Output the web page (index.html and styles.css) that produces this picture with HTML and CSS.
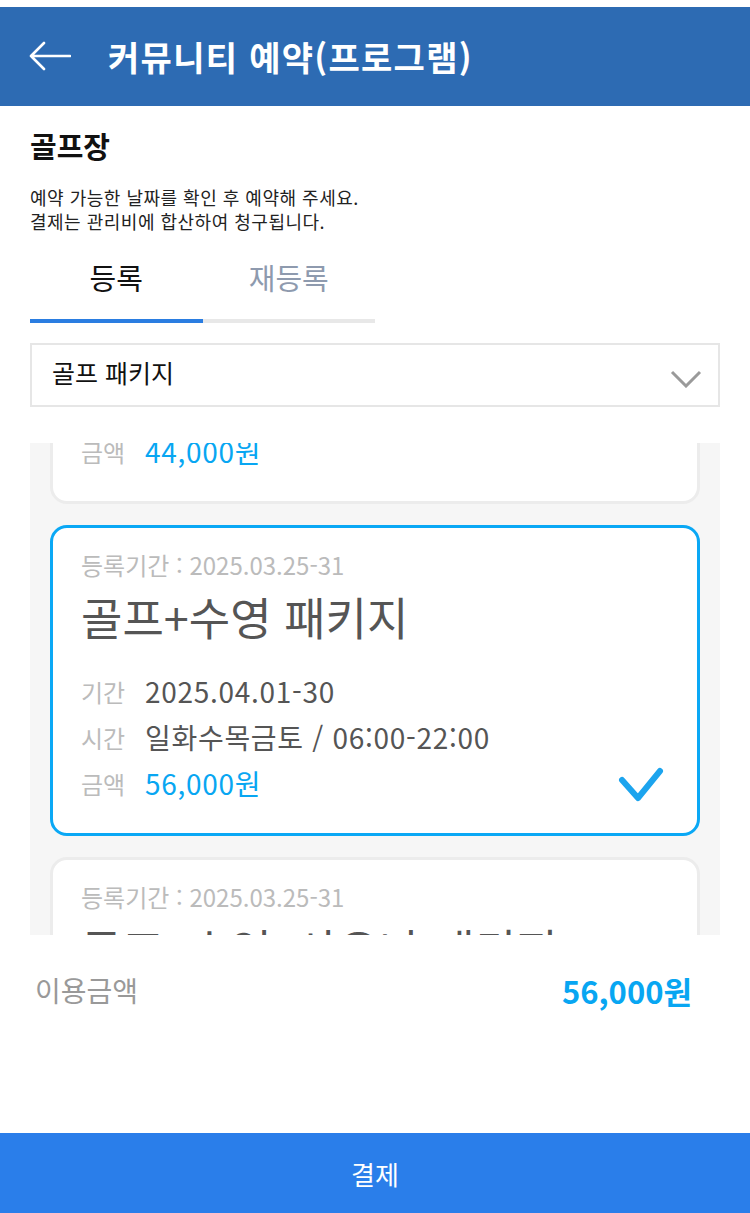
FILE: index.html
```html
<!DOCTYPE html>
<html lang="ko">
<head>
    <meta charset="UTF-8">
    <meta name="viewport" content="width=device-width, initial-scale=1.0">
    <title>커뮤니티 예약(프로그램)</title>
    <link rel="stylesheet" href="styles.css">
</head>
<body>
    <header class="topbar">
        <button class="back" aria-label="뒤로">
            <svg width="42" height="30" viewBox="0 0 42 30">
                <path d="M2 15 H41 M15 2 L2 15 L15 28" fill="none" stroke="#fff" stroke-width="2.6" stroke-linecap="round" stroke-linejoin="round"/>
            </svg>
        </button>
        <h1>커뮤니티 예약(프로그램)</h1>
    </header>

    <main class="content">
        <h2 class="place">골프장</h2>
        <p class="notice">예약 가능한 날짜를 확인 후 예약해 주세요.<br>결제는 관리비에 합산하여 청구됩니다.</p>

        <div class="tabs">
            <div class="tab active">등록</div>
            <div class="tab">재등록</div>
        </div>

        <div class="select">
            <span>골프 패키지</span>
            <svg width="32" height="18" viewBox="0 0 32 18">
                <path d="M2 2 L16 16 L30 2" fill="none" stroke="#9a9a9a" stroke-width="3"/>
            </svg>
        </div>

        <div class="list">
            <div class="list-inner">
                <div class="card">
                    <div class="period">등록기간 : 2025.03.25-31</div>
                    <div class="name">골프 패키지</div>
                    <div class="rows">
                        <div class="row"><span class="label">기간</span><span class="value">2025.04.01-30</span></div>
                        <div class="row"><span class="label">시간</span><span class="value">일화수목금토 / 06:00-22:00</span></div>
                        <div class="row"><span class="label">금액</span><span class="value price">44,000원</span></div>
                    </div>
                </div>

                <div class="card selected">
                    <div class="period">등록기간 : 2025.03.25-31</div>
                    <div class="name">골프+수영 패키지</div>
                    <div class="rows">
                        <div class="row"><span class="label">기간</span><span class="value">2025.04.01-30</span></div>
                        <div class="row"><span class="label">시간</span><span class="value">일화수목금토 / 06:00-22:00</span></div>
                        <div class="row">
                            <span class="label">금액</span><span class="value price">56,000원</span>
                            <svg class="check" width="46" height="36" viewBox="0 0 46 36">
                                <path d="M4 13 L20 31 L42 4" fill="none" stroke="#1ca4ee" stroke-width="6" stroke-linecap="round" stroke-linejoin="round"/>
                            </svg>
                        </div>
                    </div>
                </div>

                <div class="card">
                    <div class="period">등록기간 : 2025.03.25-31</div>
                    <div class="name">골프+수영+사우나 패키지</div>
                    <div class="rows">
                        <div class="row"><span class="label">기간</span><span class="value">2025.04.01-30</span></div>
                        <div class="row"><span class="label">시간</span><span class="value">일화수목금토 / 06:00-22:00</span></div>
                        <div class="row"><span class="label">금액</span><span class="value price">72,000원</span></div>
                    </div>
                </div>
            </div>
        </div>

        <div class="summary">
            <span class="summary-label">이용금액</span>
            <span class="summary-price">56,000원</span>
        </div>
    </main>

    <button class="pay">결제</button>
</body>
</html>
```

FILE: styles.css
```css
body {
    margin: 0;
    font-family: "Noto Sans CJK KR", "Noto Sans", sans-serif;
    color: #111;
    background: #fff;
    min-height: 100vh;
    display: flex;
    flex-direction: column;
}
.topbar {
    margin-top: 7px;
    height: 99px;
    background: #2d6bb3;
    display: flex;
    align-items: center;
    padding-left: 28px;
}
.back {
    background: none;
    border: none;
    padding: 0;
    width: 44px;
    height: 30px;
    margin-top: -2px;
}
.topbar h1 {
    margin: 0 0 0 36px;
    color: #fff;
    font-size: 34px;
    font-weight: 700;
    letter-spacing: 1.3px;
}
.content {
    padding: 0 30px;
}
.place {
    margin: 21px 0 0;
    font-size: 29px;
    line-height: 36px;
    font-weight: 700;
}
.notice {
    margin: 22px 0 0;
    font-size: 18px;
    line-height: 24px;
    letter-spacing: 0.5px;
    color: #222;
}
.tabs {
    display: flex;
    width: 345px;
    margin-top: 24px;
}
.tab {
    flex: 1;
    text-align: center;
    font-size: 29px;
    line-height: 40px;
    padding-bottom: 22px;
    color: #8e9aae;
    border-bottom: 4px solid #e8e8e8;
}
.tab.active {
    color: #111;
    border-bottom-color: #2a7de1;
}
.select {
    margin-top: 20px;
    height: 60px;
    border: 2px solid #e6e6e6;
    display: flex;
    align-items: center;
    justify-content: space-between;
    padding: 0 16px 0 20px;
    font-size: 25px;
}
.select span {
    margin-top: -6px;
}
.select svg {
    margin-top: 8px;
}
.list {
    margin-top: 36px;
    height: 492px;
    background: #f6f6f6;
    overflow: hidden;
    padding: 0 20px;
}
.list-inner {
    margin-top: -250px;
}
.card {
    background: #fff;
    border: 3px solid #ececec;
    border-radius: 17px;
    padding: 22px 28px 27px;
}
.card + .card {
    margin-top: 21px;
}
.card.selected {
    border-color: #0aa8f5;
}
.period {
    font-size: 24px;
    line-height: 30px;
    color: #bbb;
}
.name {
    margin-top: 11px;
    font-size: 45px;
    line-height: 52px;
    color: #555;
}
.rows {
    margin-top: 25px;
}
.row {
    display: flex;
    align-items: center;
    height: 46px;
}
.label {
    width: 64px;
    font-size: 24px;
    color: #bbb;
}
.value {
    font-size: 28px;
    letter-spacing: 0.7px;
    color: #555;
}
.price {
    color: #08a6f2;
}
.check {
    margin-left: auto;
    margin-right: 5px;
    margin-top: 4px;
}
.summary {
    margin-top: 35px;
    display: flex;
    justify-content: space-between;
    align-items: center;
    height: 40px;
    padding: 0 28px 0 5px;
}
.summary-label {
    font-size: 28px;
    color: #999;
}
.summary-price {
    font-size: 31px;
    font-weight: 700;
    color: #08a6f2;
}
.pay {
    margin-top: auto;
    height: 80px;
    border: none;
    background: #2a7eea;
    color: #fff;
    font-family: inherit;
    font-size: 26px;
    width: 100%;
}
```
